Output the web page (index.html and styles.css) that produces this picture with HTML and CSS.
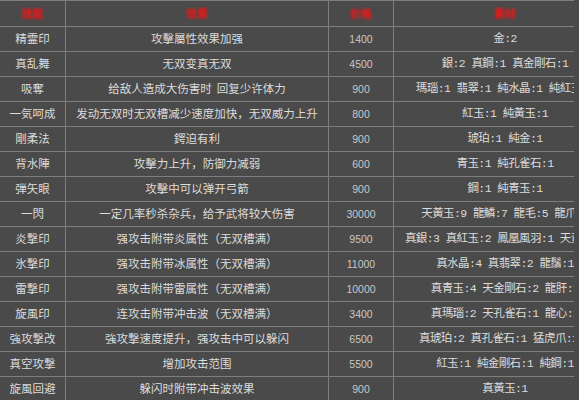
FILE: index.html
```html
<!DOCTYPE html>
<html lang="zh">
<head>
<meta charset="utf-8">
<link rel="stylesheet" href="styles.css">
</head>
<body>
<div class="frame">
  <div class="table">
    <div class="row head">
      <div class="c c1"><span class="h">技能</span></div>
      <div class="c c2"><span class="h">效果</span></div>
      <div class="c c3"><span class="h">价格</span></div>
      <div class="c c4"><span class="h">素材</span></div>
    </div>
    <div class="row"><div class="c c1">精霊印</div><div class="c c2">攻擊屬性效果加强</div><div class="c c3">1400</div><div class="c c4">金:2</div></div>
    <div class="row"><div class="c c1">真乱舞</div><div class="c c2">无双变真无双</div><div class="c c3">4500</div><div class="c c4">銀:2 真鋼:1 真金剛石:1</div></div>
    <div class="row"><div class="c c1">吸奪</div><div class="c c2">给敌人造成大伤害时  回复少许体力</div><div class="c c3">900</div><div class="c c4">瑪瑙:1 翡翠:1 純水晶:1 純紅玉:1</div></div>
    <div class="row"><div class="c c1">一気呵成</div><div class="c c2">发动无双时无双槽减少速度加快，无双威力上升</div><div class="c c3">800</div><div class="c c4">紅玉:1 純黃玉:1</div></div>
    <div class="row"><div class="c c1">剛柔法</div><div class="c c2">鍔迫有利</div><div class="c c3">900</div><div class="c c4">琥珀:1 純金:1</div></div>
    <div class="row"><div class="c c1">背水陣</div><div class="c c2">攻擊力上升，防御力减弱</div><div class="c c3">600</div><div class="c c4">青玉:1 純孔雀石:1</div></div>
    <div class="row"><div class="c c1">弾矢眼</div><div class="c c2">攻擊中可以弹开弓箭</div><div class="c c3">900</div><div class="c c4">鋼:1 純青玉:1</div></div>
    <div class="row"><div class="c c1">一閃</div><div class="c c2">一定几率秒杀杂兵，给予武将较大伤害</div><div class="c c3">30000</div><div class="c c4">天黃玉:9 龍鱗:7 龍毛:5 龍爪:3</div></div>
    <div class="row"><div class="c c1">炎撃印</div><div class="c c2">强攻击附带炎属性（无双槽满）</div><div class="c c3">9500</div><div class="c c4">真銀:3 真紅玉:2 鳳凰風羽:1 天黃玉:1</div></div>
    <div class="row"><div class="c c1">氷撃印</div><div class="c c2">强攻击附带冰属性（无双槽满）</div><div class="c c3">11000</div><div class="c c4">真水晶:4 真翡翠:2 龍鬚:1</div></div>
    <div class="row"><div class="c c1">雷撃印</div><div class="c c2">强攻击附带雷属性（无双槽满）</div><div class="c c3">10000</div><div class="c c4">真青玉:4 天金剛石:2 龍肝:1</div></div>
    <div class="row"><div class="c c1">旋風印</div><div class="c c2">连攻击附带冲击波（无双槽满）</div><div class="c c3">3400</div><div class="c c4">真瑪瑙:2 天孔雀石:1 龍心:1</div></div>
    <div class="row"><div class="c c1">強攻撃改</div><div class="c c2">強攻撃速度提升，强攻击中可以躲闪</div><div class="c c3">6500</div><div class="c c4">真琥珀:2 真孔雀石:1 猛虎爪:1 1</div></div>
    <div class="row"><div class="c c1">真空攻撃</div><div class="c c2">增加攻击范围</div><div class="c c3">5500</div><div class="c c4">紅玉:1 純金剛石:1 純鋼:1</div></div>
    <div class="row"><div class="c c1">旋風回避</div><div class="c c2">躲闪时附带冲击波效果</div><div class="c c3">900</div><div class="c c4">真黃玉:1</div></div>
  </div>
</div>
</body>
</html>
```

FILE: styles.css
```css
html, body {
  margin: 0;
  padding: 0;
  background: #4a4a4a;
}
body {
  font-family: "Noto Sans CJK JP", "Noto Sans CJK SC", sans-serif;
  color: #dcdcdc;
}
.frame {
  width: 574px;
  height: 400px;
  overflow: hidden;
}
.table {
  width: 616px;
  border-top: 1px solid #7e7e7e;
}
.row {
  display: grid;
  grid-template-columns: 66px 263px 65px 222px;
  height: 25px;
  box-sizing: border-box;
  border-bottom: 1px solid #7e7e7e;
}
.row.head {
  height: 26px;
}
.c {
  display: flex;
  align-items: center;
  justify-content: center;
  white-space: pre;
  overflow: visible;
  font-size: 11.5px;
  line-height: 1;
  box-sizing: border-box;
}
.c1, .c2, .c3 {
  border-right: 1px solid #7e7e7e;
}
.c1 {
  font-family: "Noto Sans CJK JP", sans-serif;
}
.c2 {
  font-family: "Noto Sans CJK SC", sans-serif;
}
.c3 {
  font-family: "Liberation Sans", sans-serif;
  font-size: 10.5px;
  color: #c8c8c8;
}
.c4 {
  font-family: "Liberation Mono", "Noto Sans CJK TC", monospace;
  letter-spacing: -0.6px;
}
.h {
  color: #ff1010;
  font-family: "Noto Sans CJK SC", sans-serif;
  font-size: 11px;
  font-weight: bold;
  letter-spacing: 0;
  filter: blur(0.8px);
}
```
